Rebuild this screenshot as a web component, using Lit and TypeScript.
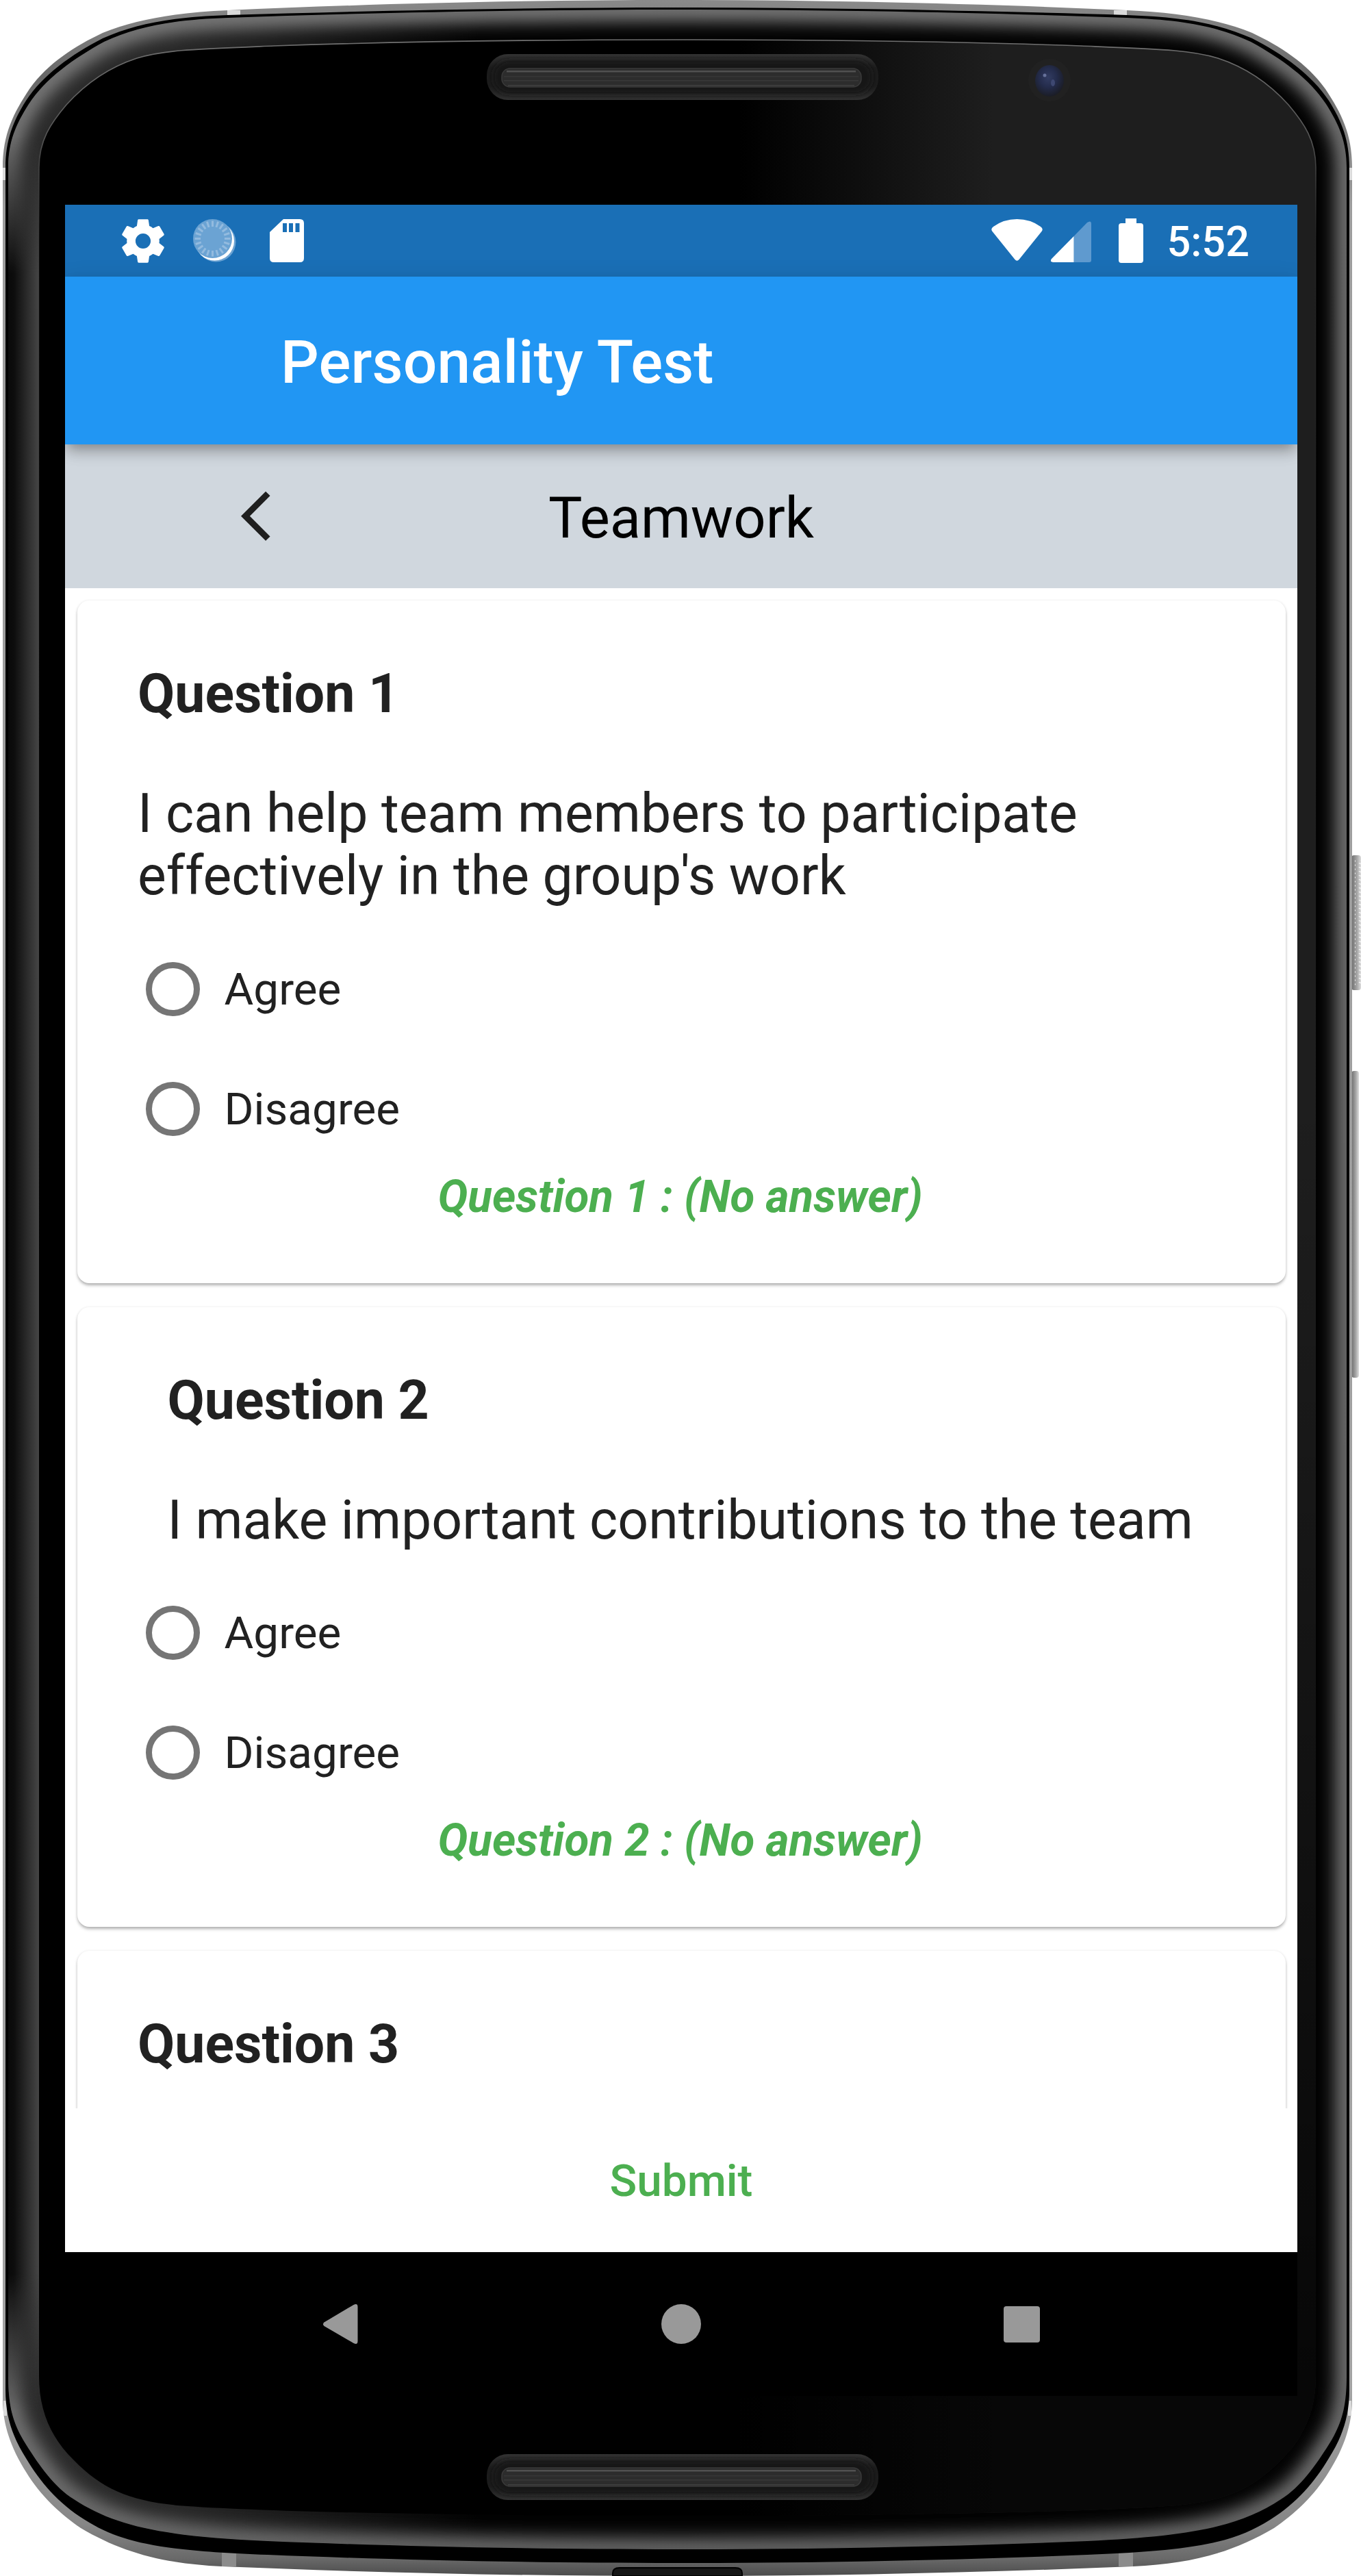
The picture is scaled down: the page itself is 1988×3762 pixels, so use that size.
import { LitElement, html, css, svg } from "lit";
import { customElement, property } from "lit/decorators.js";

interface Question {
  id: number;
  text: string;
  inset?: boolean;
}

const QUESTIONS: Question[] = [
  { id: 1, text: "I can help team members to participate effectively in the group's work" },
  { id: 2, text: "I make important contributions to the team", inset: true },
  { id: 3, text: "" },
];

type Point = [number, number];

// Builds a closed outline from its left half (top centre to bottom centre), mirrored around the device axis.
const AXIS = 1979;
const outline = (left: Point[]): string => {
  const right = left
    .slice(0, -1)
    .reverse()
    .map(([x, y]): Point => [AXIS - x, y]);
  const [first, ...rest] = [...left, ...right];
  return `M${first.join(" ")}C${rest.map((p) => p.join(" ")).join(" ")}Z`;
};

const OUTER = outline([
  [989.5, 0], [760, 0], [530, 6], [333, 15], [260, 18], [200, 28], [150, 48], [110, 67], [70, 92], [43, 130],
  [20, 165], [4, 195], [4, 245], [4, 1300], [4, 2500], [4, 3505], [4, 3545], [19, 3580], [38, 3610],
  [59, 3645], [89, 3672], [118, 3692], [179, 3728], [239, 3744], [324, 3748], [540, 3757], [760, 3762], [989.5, 3762],
]);
const SEAM = outline([
  [989.5, 11], [760, 11], [530, 16], [333, 22], [250, 25], [200, 34], [150, 56], [105, 79], [62, 110], [38, 147],
  [19, 177], [8, 205], [8, 245], [8, 1300], [8, 2500], [8, 3490], [8, 3530], [19, 3560], [38, 3590],
  [59, 3625], [84, 3655], [124, 3680], [179, 3715], [239, 3725], [391, 3731], [560, 3738], [760, 3743], [989.5, 3743],
]);
const BEZEL = outline([
  [989.5, 14], [760, 14], [530, 19], [333, 26], [252, 29], [202, 38], [152, 61], [108, 85], [66, 115], [42, 152],
  [23, 182], [12, 207], [12, 245], [12, 1300], [12, 2500], [12, 3470], [12, 3515], [19, 3540], [38, 3570],
  [57, 3600], [79, 3632], [108, 3650], [169, 3690], [239, 3704], [391, 3711], [560, 3718], [760, 3723], [989.5, 3723],
]);
const GLASS = outline([
  [989.5, 58], [790, 58], [600, 60], [400, 67], [280, 72], [240, 73], [200, 85], [160, 98], [125, 122], [97, 153],
  [74, 180], [57, 205], [57, 245], [57, 1300], [57, 2500], [57, 3470], [57, 3520], [74, 3560], [108, 3593],
  [149, 3635], [189, 3652], [260, 3659], [400, 3670], [740, 3674], [989.5, 3674],
]);

const speaker = (y: number, inner: number) => svg`
  <g>
    <rect x="711" y=${y} width="572" height="67" rx="31" fill="url(#slot)" />
    <rect x="720" y=${y + 9} width="554" height="49" rx="24" fill="#151515" filter="url(#soft4)" />
    <rect x="733" y=${inner} width="525" height="27" rx="12" fill="#2c2c2c" stroke="#3a3a3a" stroke-width="1.5" />
    <rect x="740" y=${inner + 3} width="510" height="2.5" fill="#505050" />
    <rect x="736" y=${inner + 11} width="518" height="1.5" fill="#363636" />
    <rect x="736" y=${inner + 17} width="518" height="1.5" fill="#393939" />
    <rect x="742" y=${inner + 24} width="506" height="1.5" fill="#404040" />
  </g>`;

@customElement("phone-frame")
class PhoneFrame extends LitElement {
  static styles = css`
    :host { display: block; }
    svg { display: block; }
  `;
  render() {
    return html`<svg width="1988" height="3762" viewBox="0 0 1988 3762">
      <defs>
        <clipPath id="bezelClip"><path d=${BEZEL} /></clipPath>
        <clipPath id="glassClip"><path d=${GLASS} /></clipPath>
        <filter id="soft12" x="-5%" y="-5%" width="110%" height="110%"><feGaussianBlur stdDeviation="12" /></filter>
        <filter id="soft4" x="-5%" y="-30%" width="110%" height="160%"><feGaussianBlur stdDeviation="4" /></filter>
        <linearGradient id="metal" x1="0" y1="0" x2="0" y2="1">
          <stop offset="0" stop-color="#8a8a8a" /><stop offset=".03" stop-color="#686868" />
          <stop offset=".08" stop-color="#9c9c9c" /><stop offset=".93" stop-color="#a2a2a2" />
          <stop offset=".98" stop-color="#868686" /><stop offset=".993" stop-color="#6a6a6a" /><stop offset="1" stop-color="#4c4c4c" />
        </linearGradient>
        <linearGradient id="glow" gradientUnits="userSpaceOnUse" x1="0" y1="0" x2="0" y2="3762">
          <stop offset="0" stop-color="#808080" /><stop offset=".06" stop-color="#787878" />
          <stop offset=".95" stop-color="#747474" /><stop offset="1" stop-color="#6a6a6a" />
        </linearGradient>
        <linearGradient id="base" gradientUnits="userSpaceOnUse" x1="0" y1="0" x2="700" y2="0">
          <stop offset="0" stop-color="#2b2b2b" /><stop offset=".36" stop-color="#282828" /><stop offset="1" stop-color="#020202" />
        </linearGradient>
        <linearGradient id="leftEdge" x1="0" y1="0" x2="1" y2="0">
          <stop offset="0" stop-color="#080808" /><stop offset=".25" stop-color="#0d0d0d" />
          <stop offset=".8" stop-color="#383838" /><stop offset="1" stop-color="#474747" />
        </linearGradient>
        <linearGradient id="fadeY" x1="0" y1="0" x2="0" y2="1">
          <stop offset="0" stop-color="#fff" stop-opacity="0" /><stop offset=".06" stop-color="#fff" />
          <stop offset=".94" stop-color="#fff" /><stop offset="1" stop-color="#fff" stop-opacity="0" />
        </linearGradient>
        <mask id="leftMask"><rect x="0" y="200" width="80" height="3320" fill="url(#fadeY)" /></mask>
        <linearGradient id="sheen" gradientUnits="userSpaceOnUse" x1="1080" y1="0" x2="1450" y2="0">
          <stop offset="0" stop-color="#1e1e1e" stop-opacity="0" /><stop offset="1" stop-color="#1e1e1e" />
        </linearGradient>
        <linearGradient id="shade" gradientUnits="userSpaceOnUse" x1="0" y1="1600" x2="0" y2="3500">
          <stop offset="0" stop-color="#000" stop-opacity="0" /><stop offset="1" stop-color="#000" stop-opacity=".78" />
        </linearGradient>
        <linearGradient id="rim" gradientUnits="userSpaceOnUse" x1="0" y1="58" x2="0" y2="3672">
          <stop offset="0" stop-color="#707070" /><stop offset=".04" stop-color="#555" />
          <stop offset=".08" stop-color="#333" stop-opacity=".3" /><stop offset=".5" stop-color="#222" stop-opacity="0" />
          <stop offset="1" stop-color="#000" stop-opacity="0" />
        </linearGradient>
        <linearGradient id="slot" x1="0" y1="0" x2="0" y2="1">
          <stop offset="0" stop-color="#343434" /><stop offset=".3" stop-color="#1c1c1c" />
          <stop offset=".7" stop-color="#1c1c1c" /><stop offset="1" stop-color="#323232" />
        </linearGradient>
        <linearGradient id="key" x1="0" y1="0" x2="1" y2="0">
          <stop offset="0" stop-color="#6c6c6c" /><stop offset=".6" stop-color="#a8a8a8" /><stop offset="1" stop-color="#dcdcdc" />
        </linearGradient>
        <pattern id="knurl" width="12" height="6" patternUnits="userSpaceOnUse">
          <path d="M5 0L12 4" stroke="#f0f0f0" stroke-width="2" />
        </pattern>
        <radialGradient id="lens" cx=".45" cy=".4" r=".6">
          <stop offset="0" stop-color="#323c62" /><stop offset=".5" stop-color="#242c4c" /><stop offset="1" stop-color="#1b1d26" />
        </radialGradient>
      </defs>

      <rect x="1974" y="1249" width="14" height="197" rx="4" fill="url(#key)" />
      <rect x="1979" y="1256" width="9" height="183" fill="url(#knurl)" />
      <rect x="1974" y="1564" width="11" height="448" rx="4" fill="url(#key)" />

      <path d=${OUTER} fill="url(#metal)" />
      <g fill="#dadada">
        <rect x="332" y="15" width="19" height="10" /><rect x="1627" y="15" width="19" height="10" />
        <rect x="4" y="245" width="5" height="18" /><rect x="1970" y="245" width="5" height="18" />
        <rect x="5" y="3506" width="5" height="22" /><rect x="1969" y="3506" width="5" height="22" />
      </g>
      <g fill="#8c8c8c">
        <rect x="324" y="3727" width="21" height="21" /><rect x="1634" y="3727" width="21" height="21" />
      </g>
      <path d=${SEAM} fill="#000" />
      <g clip-path="url(#bezelClip)">
        <path d=${BEZEL} fill="url(#base)" />
        <path d=${BEZEL} fill="none" stroke="url(#glow)" stroke-width="32" filter="url(#soft12)" />
        <rect x="8" y="180" width="50" height="3400" fill="url(#leftEdge)" mask="url(#leftMask)" />
      </g>
      <path d=${GLASS} fill="#000" />
      <g clip-path="url(#glassClip)">
        <rect x="1080" y="50" width="850" height="3640" fill="url(#sheen)" />
        <rect x="1080" y="50" width="850" height="3640" fill="url(#shade)" />
      </g>
      <path d=${GLASS} fill="none" stroke="url(#rim)" stroke-width="1.6" />

      ${speaker(79, 100)} ${speaker(3584, 3604)}

      <circle cx="1533" cy="117" r="31" fill="#212121" />
      <ellipse cx="1533" cy="118" rx="21" ry="23" fill="url(#lens)" />
      <circle cx="1526" cy="110" r="2.500" fill="#66719a" />
      <ellipse cx="1538" cy="121" rx="3" ry="5" fill="#3e4871" />

      <path d="M895 3762V3758Q895 3750 905 3750H1074Q1084 3750 1084 3758V3762Z" fill="#161616" stroke="#000" stroke-width="2" />
    </svg>`;
  }
}

@customElement("status-bar")
class StatusBar extends LitElement {
  static styles = css`
    :host {
      display: flex;
      align-items: center;
      justify-content: space-between;
      box-sizing: border-box;
      flex: none;
      height: 105px;
      padding: 0 70px 0 76px;
      background: #1a6fb6;
      color: #fff;
      font: 500 61.25px/105px Roboto, sans-serif;
    }
    .group { display: flex; align-items: center; height: 105px; }
    svg { display: block; }
    .sync { margin-left: 35px; }
    .card { margin-left: 49px; }
    .signal { margin-left: 12px; }
    .battery { margin-left: 40px; }
    .time { margin-left: 34px; padding-top: 4px; }
  `;
  render() {
    const ticks = Array.from({ length: 20 }, (_, i) => i * 18);
    return html`
      <div class="group">
        <svg width="76" height="76" viewBox="0 0 24 24" fill="#fff">
          <path d="M19.43 12.98c.04-.32.07-.64.07-.98s-.03-.66-.07-.98l2.11-1.65c.19-.15.24-.42.12-.64l-2-3.46c-.12-.22-.39-.3-.61-.22l-2.49 1c-.52-.4-1.08-.73-1.69-.98l-.38-2.65C14.46 2.18 14.25 2 14 2h-4c-.25 0-.46.18-.49.42l-.38 2.65c-.61.25-1.17.59-1.69.98l-2.49-1c-.23-.09-.49 0-.61.22l-2 3.46c-.13.22-.07.49.12.64l2.11 1.65c-.04.32-.07.65-.07.98s.03.66.07.98l-2.11 1.65c-.19.15-.24.42-.12.64l2 3.46c.12.22.39.3.61.22l2.49-1c.52.4 1.08.73 1.69.98l.38 2.65c.03.24.24.42.49.42h4c.25 0 .46-.18.49-.42l.38-2.65c.61-.25 1.17-.59 1.69-.98l2.49 1c.23.09.49 0 .61-.22l2-3.46c.12-.22.07-.49-.12-.64l-2.11-1.65zM12 15.5c-1.93 0-3.5-1.57-3.5-3.5s1.57-3.5 3.5-3.5 3.5 1.57 3.5 3.5-1.57 3.5-3.5 3.5z" />
        </svg>
        <svg class="sync" width="63" height="63" viewBox="0 0 63 63">
          <circle cx="33.5" cy="33.5" r="29" fill="#6ba3d3" />
          <circle cx="31.5" cy="32" r="28.500" fill="#fff" />
          <circle cx="28.5" cy="28.5" r="28.5" fill="#6ba3d3" />
          ${ticks.map(
            (a) => svg`<path d="M28.5 2.5V11" transform="rotate(${a} 28.5 28.5)" stroke="#93bbdf" stroke-width="3" />`
          )}
        </svg>
        <svg class="card" width="50" height="63" viewBox="0 0 50 63">
          <path d="M20 0H44Q50 0 50 6V57Q50 63 44 63H6Q0 63 0 57V19Z" fill="#fff" />
          <path d="M19 6h6v13h-6zM28 6h6v13h-6zM37.500 6h6v13h-6z" fill="#1a6fb6" />
        </svg>
      </div>
      <div class="group">
        <svg width="75" height="63" viewBox="0 0 75 63">
          <path d="M1.500 18Q-1.500 14 3 11Q18 0 37.500 0T72 11Q76.500 14 73.500 18L40.500 59Q37.500 62.500 34.500 59Z" fill="#fff" />
        </svg>
        <svg class="signal" width="59" height="63" viewBox="0 0 59 63">
          <path d="M33.500 25L53 5Q59 1 59 7V60Q59 63 56 63H33.500Z" fill="#5f9acf" />
          <path d="M33.500 25V63H3Q-2 62 1 58Z" fill="#fff" />
        </svg>
        <svg class="battery" width="36" height="65" viewBox="0 0 36 65">
          <path d="M10 0H26V7H32Q36 7 36 11V61Q36 65 32 65H4Q0 65 0 61V11Q0 7 4 7H10Z" fill="#fff" />
        </svg>
        <span class="time">5:52</span>
      </div>
    `;
  }
}

@customElement("question-card")
class QuestionCard extends LitElement {
  @property({ attribute: false }) question!: Question;

  static styles = css`
    :host {
      display: block;
      box-sizing: border-box;
      flex: none;
      padding-bottom: 88px;
      border-radius: 17.5px;
      background: #fff;
      color: #212121;
      font-family: Roboto, sans-serif;
      box-shadow: 0 4px 5px -1px rgba(0, 0, 0, 0.26), 0 1px 4px rgba(0, 0, 0, 0.14);
    }
    .copy { padding: 91px 87px 0 88.5px; }
    .copy.inset { padding-left: 132px; padding-right: 0; }
    h2, p { margin: 0; font-size: 78.75px; line-height: 91.5px; }
    h2 { font-weight: 700; }
    p { margin-top: 83.5px; font-weight: 400; }
    .options { padding: 31px 0 2px 100.5px; }
    .option { display: flex; align-items: center; gap: 35.5px; height: 175px; font-size: 65.625px; }
    .radio { box-sizing: border-box; width: 79px; height: 79px; border: 9px solid #757575; border-radius: 50%; }
    .answer {
      padding-right: 3px;
      color: #4caf50;
      font-size: 65.625px;
      line-height: 77px;
      font-style: italic;
      font-weight: 700;
      text-align: center;
    }
  `;

  render() {
    const { id, text, inset } = this.question;
    return html`
      <div class="copy ${inset ? "inset" : ""}">
        <h2>Question ${id}</h2>
        ${text ? html`<p>${text}</p>` : ""}
      </div>
      ${text
        ? html`
            <div class="options">
              ${["Agree", "Disagree"].map(
                (o) => html`<div class="option"><span class="radio"></span><span>${o}</span></div>`
              )}
            </div>
            <div class="answer">Question ${id} : (No answer)</div>
          `
        : ""}
    `;
  }
}

@customElement("app-root")
class AppRoot extends LitElement {
  static styles = css`
    :host { display: block; width: 1988px; height: 3762px; overflow: hidden; background: #fff; font-family: Roboto, sans-serif; }
    .device { display: grid; grid-template: 3762px / 1988px; }
    .frame, .screen { grid-area: 1 / 1; }
    .screen {
      display: flex;
      flex-direction: column;
      z-index: 1;
      width: 1800px;
      height: 3200px;
      margin: 299px 0 0 95px;
      background: #fff;
      overflow: hidden;
    }
    .appbar {
      display: flex;
      align-items: center;
      box-sizing: border-box;
      flex: none;
      z-index: 1;
      height: 245px;
      padding: 4px 0 0 315px;
      background: #2196f3;
      color: #fff;
      font-size: 87.5px;
      font-weight: 500;
      letter-spacing: 0.15px;
      box-shadow: 0 10px 18px -4px rgba(0, 0, 0, 0.3), 0 18px 22px rgba(0, 0, 0, 0.04), 0 4px 30px rgba(0, 0, 0, 0.1);
    }
    .section {
      display: grid;
      grid-template-columns: 1fr auto 1fr;
      align-items: center;
      flex: none;
      height: 210px;
      background: #cfd8dc;
      background: #d0d7de;
      color: #000;
      font-size: 83.125px;
    }
    .back { display: block; margin-left: 257px; }
    .title { padding-top: 4px; }
    .list {
      display: flex;
      flex-direction: column;
      gap: 35px;
      box-sizing: border-box;
      height: 2220px;
      flex: none;
      padding: 17.5px 17.5px 0;
      overflow: hidden;
    }
    .submit {
      display: flex;
      align-items: center;
      justify-content: center;
      flex: none;
      height: 210px;
      color: #4caf50;
      font-size: 65.625px;
      font-weight: 500;
    }
    .nav {
      display: flex;
      align-items: center;
      justify-content: center;
      gap: 441.5px;
      box-sizing: border-box;
      flex: none;
      height: 210px;
      padding-right: 3px;
      background: #000;
    }
    .nav svg { display: block; }
  `;

  render() {
    return html`
      <div class="device">
        <phone-frame class="frame"></phone-frame>
        <div class="screen">
          <status-bar></status-bar>
          <div class="appbar">Personality Test</div>
          <div class="section">
            <svg class="back" width="87.5" height="87.5" viewBox="0 0 24 24">
              <path d="M11.67 3.87L9.9 2.1 0 12l9.900 9.900 1.770-1.770L3.540 12z" fill="#1f1f1f" />
            </svg>
            <span class="title">Teamwork</span>
          </div>
          <div class="list">
            ${QUESTIONS.map((q) => html`<question-card .question=${q}></question-card>`)}
          </div>
          <div class="submit">Submit</div>
          <div class="nav">
            <svg width="56" height="60" viewBox="-1.500 0 56 60">
              <path d="M3 27.500L46 2Q52 -1 52 5V55Q52 61 46 58L3 33Q0 30 3 27.500Z" fill="#999" />
            </svg>
            <svg width="58" height="58" viewBox="0 0 58 58"><circle cx="29" cy="29" r="29" fill="#999" /></svg>
            <svg width="53" height="53" viewBox="0 0 53 53"><rect width="53" height="53" rx="4" fill="#999" /></svg>
          </div>
        </div>
      </div>
    `;
  }
}
